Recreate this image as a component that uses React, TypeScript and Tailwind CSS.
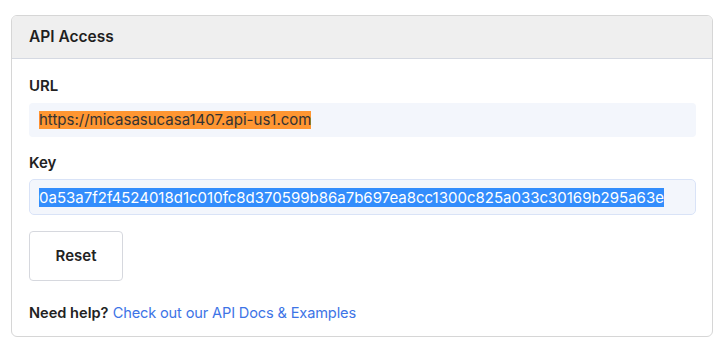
export default function App() {
  const font = { fontFamily: '"Inter", "Noto Sans", sans-serif' };
  return (
    <div className="w-[726px] h-[351px] bg-white pt-[15px] pl-[11px]" style={font}>
      <div className="w-[702px] h-[322px] border border-[#d6d6d6] rounded-[6px] overflow-hidden">
        <div className="h-[43px] bg-[#efefef] border-b border-[#d5d9e2] flex items-center pl-[17px] text-[15.5px] font-semibold text-[#1f1f1f]">
          API Access
        </div>
        <div className="pl-[17px] pr-[16px] pt-[17px] flex flex-col">
          <div className="text-[15px] leading-[20px] font-semibold text-[#222]">URL</div>
          <div className="mt-[7px] h-[34px] bg-[#f3f6fc] rounded-[4px] flex items-center pl-[10px] text-[15px] text-[#333]">
            <span className="bg-[#ff9632] leading-[18px]">https://micasasucasa1407.api-us1.com</span>
          </div>
          <div className="mt-[16px] text-[15px] leading-[20px] font-semibold text-[#222]">Key</div>
          <div className="mt-[6px] h-[36px] bg-[#f3f6fc] border border-[#d9e3f7] rounded-[5px] flex items-center pl-[9px] text-[15px] text-white">
            <span className="bg-[#338dfc] leading-[19px]">0a53a7f2f4524018d1c010fc8d370599b86a7b697ea8cc1300c825a033c30169b295a63e</span>
          </div>
          <button className="mt-[16px] w-[94px] h-[50px] border border-[#d6d8de] rounded-[4px] bg-white text-[15px] font-semibold text-[#222]">
            Reset
          </button>
          <div className="mt-[22px] text-[14.6px] leading-[20px]">
            <span className="font-semibold text-[#222]">Need help?</span>{" "}
            <span className="text-[#3d74e6] tracking-[-0.15px]">Check out our API Docs &amp; Examples</span>
          </div>
        </div>
      </div>
    </div>
  );
}
